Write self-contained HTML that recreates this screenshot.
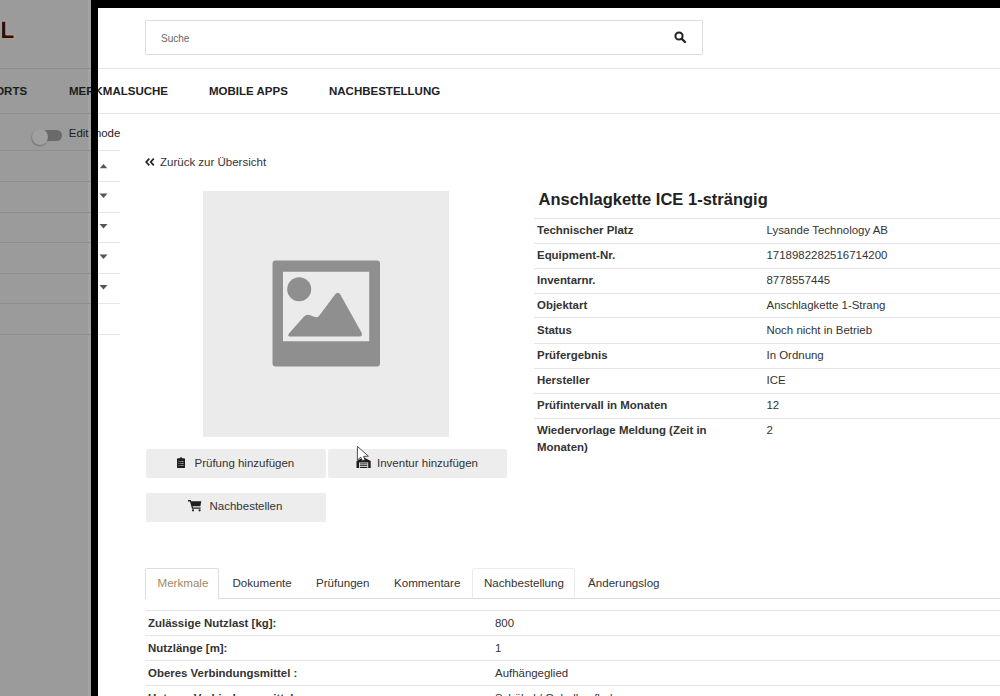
<!DOCTYPE html>
<html><head><meta charset="utf-8">
<style>
*{margin:0;padding:0;box-sizing:border-box}
html,body{width:1000px;height:696px;overflow:hidden;background:#fff;font-family:"Liberation Sans",sans-serif;color:#333}
.a{position:absolute;white-space:nowrap}
#gray{position:absolute;left:0;top:0;width:91px;height:696px;background:#9b9b9b;overflow:hidden}
#blk-l{position:absolute;left:90.9px;top:0;width:6.8px;height:696px;background:#000}
#blk-t{position:absolute;left:91px;top:0;width:909px;height:7.8px;background:#000}
.hl{position:absolute;height:1px;background:#e6e6e6}
.nav{position:absolute;top:84.8px;font-size:11.5px;font-weight:bold;color:#222;letter-spacing:0}
.row{position:absolute;left:534px;width:466px;height:1px;background:#e4e4e4}
.lab{position:absolute;left:537px;font-size:11.45px;font-weight:bold;color:#333}
.val{position:absolute;left:766.5px;font-size:11.45px;color:#333}
.btn{position:absolute;height:29px;background:#ededed;border-radius:2px;font-size:12px;color:#333}
.tab{position:absolute;top:575.5px;font-size:11.6px;color:#333}
.mrow{position:absolute;left:145px;width:855px;height:1px;background:#e4e4e4}
.mlab{position:absolute;left:148px;margin-top:1px;font-size:11.45px;font-weight:bold;color:#333}
.mval{position:absolute;left:495px;margin-top:1px;font-size:11.45px;color:#333}
</style></head><body>

<!-- header lines in white area -->
<div class="hl" style="left:97px;top:68px;width:903px"></div>
<div class="hl" style="left:97px;top:113px;width:903px"></div>

<!-- search -->
<div style="position:absolute;left:145px;top:20px;width:558px;height:35px;border:1px solid #ddd;border-radius:1px"></div>
<div class="a" style="left:161px;top:32.5px;font-size:10px;color:#666">Suche</div>
<svg style="position:absolute;left:674px;top:31px" width="13" height="12" viewBox="0 0 13 12">
<circle cx="5" cy="5" r="3.6" fill="none" stroke="#222" stroke-width="2"/>
<line x1="7.6" y1="7.6" x2="11" y2="11" stroke="#222" stroke-width="2.2" stroke-linecap="round"/>
</svg>

<!-- nav -->
<div class="nav" style="left:69px">MERKMALSUCHE</div>
<div class="nav" style="left:209px">MOBILE APPS</div>
<div class="nav" style="left:329px">NACHBESTELLUNG</div>

<!-- sidebar parts in white -->
<div class="a" style="left:68.8px;top:126.5px;font-size:11.45px;color:#222">Edit mode</div>
<div class="hl" style="left:97px;top:150px;width:23px"></div>
<div class="hl" style="left:97px;top:181px;width:23px"></div>
<div class="hl" style="left:97px;top:212px;width:23px"></div>
<div class="hl" style="left:97px;top:242px;width:23px"></div>
<div class="hl" style="left:97px;top:273px;width:23px"></div>
<div class="hl" style="left:97px;top:303px;width:23px"></div>
<div class="hl" style="left:97px;top:334px;width:23px"></div>
<svg style="position:absolute;left:99px;top:163px" width="9" height="130" viewBox="0 0 9 130">
<path d="M0.8 5.2 L4.5 1 L8.2 5.2 Z" fill="#555"/>
<path d="M0.5 30.5 L8.5 30.5 L4.5 35 Z" fill="#555"/>
<path d="M0.5 61 L8.5 61 L4.5 65.5 Z" fill="#555"/>
<path d="M0.5 91.5 L8.5 91.5 L4.5 96 Z" fill="#555"/>
<path d="M0.5 122 L8.5 122 L4.5 126.5 Z" fill="#555"/>
</svg>

<!-- back link -->
<svg style="position:absolute;left:145px;top:158px" width="10" height="8" viewBox="0 0 10 8">
<path d="M4.3 0.7 L1.2 4 L4.3 7.3 M8.8 0.7 L5.7 4 L8.8 7.3" fill="none" stroke="#222" stroke-width="1.7"/>
</svg>
<div class="a" style="left:160px;top:155.5px;font-size:11.5px;color:#333">Zurück zur Übersicht</div>

<!-- image placeholder -->
<div style="position:absolute;left:203px;top:190.5px;width:246px;height:246px;background:#ebebec"></div>
<svg style="position:absolute;left:272px;top:260px" width="109" height="108" viewBox="272 260 109 108">
<path fill="#8f8f8f" fill-rule="evenodd" d="M275.5 260.5 H377 Q380 260.5 380 263.5 V363.5 Q380 366.5 377 366.5 H275.5 Q272.5 366.5 272.5 363.5 V263.5 Q272.5 260.5 275.5 260.5 Z M283 271.8 V341.3 H369.2 V271.8 Z"/>
<circle cx="299.2" cy="289.3" r="12" fill="#8f8f8f"/>
<path fill="#8f8f8f" d="M290 336.4 Q287 336.4 289 333.5 L304 316.5 Q307 313.5 311 315.5 L314 316.8 Q317 318 319 316 L335 294.5 Q337.7 291 340.3 294.5 L361.5 332.5 Q363 336.4 359.5 336.4 Z"/>
</svg>

<!-- buttons -->
<div class="btn" style="left:145.5px;top:449px;width:180px"></div>
<div class="btn" style="left:328px;top:449px;width:179px"></div>
<div class="btn" style="left:145.5px;top:492.5px;width:180px"></div>
<div class="a" style="left:194.5px;top:456.5px;font-size:11.5px;color:#333">Prüfung hinzufügen</div>
<div class="a" style="left:377px;top:456.5px;font-size:11.5px;color:#333">Inventur hinzufügen</div>
<div class="a" style="left:209.5px;top:499.5px;font-size:11.5px;color:#333">Nachbestellen</div>

<!-- icons -->
<svg style="position:absolute;left:176px;top:456px" width="10" height="13" viewBox="176 456 10 13">
<path fill="#1e1e1e" d="M178 458.3 H180 Q180.3 457 181 457 Q181.7 457 182 458.3 H184 Q185 458.3 185 459.3 V467.2 Q185 468.1 184 468.1 H178 Q177 468.1 177 467.2 V459.3 Q177 458.3 178 458.3 Z"/>
<rect x="178.4" y="461" width="1.1" height="1" fill="#8a8a8a"/><rect x="180.3" y="461" width="3.3" height="1" fill="#8a8a8a"/>
<rect x="178.4" y="463" width="1.1" height="1" fill="#8a8a8a"/><rect x="180.3" y="463" width="3.3" height="1" fill="#8a8a8a"/>
<rect x="178.4" y="465" width="1.1" height="1" fill="#8a8a8a"/><rect x="180.3" y="465" width="3.3" height="1" fill="#8a8a8a"/>
</svg>
<svg style="position:absolute;left:356px;top:456px" width="16" height="13" viewBox="356 456 16 13">
<path fill="#1e1e1e" d="M356.5 461 L363.6 457.3 L370.7 461 V468 H368.2 V462.6 H359 V468 H356.5 Z"/>
<rect x="359.8" y="463.4" width="7.6" height="1" fill="#1e1e1e"/>
<rect x="359.8" y="465.2" width="7.6" height="1" fill="#1e1e1e"/>
<rect x="359.8" y="467" width="7.6" height="1" fill="#1e1e1e"/>
</svg>
<svg style="position:absolute;left:187px;top:499px" width="16" height="13" viewBox="187 499 16 13">
<path fill="#1e1e1e" d="M188 500 H190.6 L191.2 501.2 H201.3 L200.4 506.2 H192.6 L193 507.6 H200.6 V508.8 H192 L190 501.4 H188 Z"/>
<circle cx="193" cy="510.3" r="1.1" fill="#1e1e1e"/>
<circle cx="199.6" cy="510.3" r="1.1" fill="#1e1e1e"/>
</svg>

<!-- title -->
<div class="a" style="left:538.5px;top:190px;font-size:16.5px;font-weight:bold;color:#222">Anschlagkette ICE 1-strängig</div>

<!-- details table -->
<div class="row" style="top:218px"></div>
<div class="row" style="top:243px"></div>
<div class="row" style="top:268px"></div>
<div class="row" style="top:293px"></div>
<div class="row" style="top:317px"></div>
<div class="row" style="top:343px"></div>
<div class="row" style="top:367.5px"></div>
<div class="row" style="top:393px"></div>
<div class="row" style="top:418px"></div>

<div class="lab" style="top:224px">Technischer Platz</div>
<div class="lab" style="top:249px">Equipment-Nr.</div>
<div class="lab" style="top:274px">Inventarnr.</div>
<div class="lab" style="top:299px">Objektart</div>
<div class="lab" style="top:324px">Status</div>
<div class="lab" style="top:349px">Prüfergebnis</div>
<div class="lab" style="top:374px">Hersteller</div>
<div class="lab" style="top:399px">Prüfintervall in Monaten</div>
<div class="lab" style="top:421.5px;line-height:17.6px;white-space:normal;width:200px">Wiedervorlage Meldung (Zeit in<br>Monaten)</div>

<div class="val" style="top:224px">Lysande Technology AB</div>
<div class="val" style="top:249px">1718982282516714200</div>
<div class="val" style="top:274px">8778557445</div>
<div class="val" style="top:299px">Anschlagkette 1-Strang</div>
<div class="val" style="top:324px">Noch nicht in Betrieb</div>
<div class="val" style="top:349px">In Ordnung</div>
<div class="val" style="top:374px">ICE</div>
<div class="val" style="top:399px">12</div>
<div class="val" style="top:424px">2</div>

<!-- tabs -->
<div style="position:absolute;left:146px;top:598px;width:854px;height:1px;background:#ddd"></div>
<div style="position:absolute;left:145px;top:568px;width:74px;height:31px;border:1px solid #ddd;border-bottom:none;background:#fff;border-radius:2px 2px 0 0"></div>
<div style="position:absolute;left:472px;top:568px;width:103px;height:30px;border:1px solid #ececec;border-bottom:none;border-radius:2px 2px 0 0"></div>
<div class="tab" style="left:157.5px;color:#9f8763">Merkmale</div>
<div class="tab" style="left:232.5px">Dokumente</div>
<div class="tab" style="left:316px">Prüfungen</div>
<div class="tab" style="left:394px">Kommentare</div>
<div class="tab" style="left:484px">Nachbestellung</div>
<div class="tab" style="left:588px">Änderungslog</div>

<div class="mrow" style="top:610px"></div>
<div class="mrow" style="top:635px"></div>
<div class="mrow" style="top:660px"></div>
<div class="mrow" style="top:685px"></div>
<div class="mlab" style="top:616px">Zulässige Nutzlast [kg]:</div>
<div class="mlab" style="top:641px">Nutzlänge [m]:</div>
<div class="mlab" style="top:666px">Oberes Verbindungsmittel :</div>
<div class="mlab" style="top:691px">Unteres Verbindungsmittel :</div>
<div class="mval" style="top:616px">800</div>
<div class="mval" style="top:641px">1</div>
<div class="mval" style="top:666px">Aufhängeglied</div>
<div class="mval" style="top:691px">Schäkel / Gabelkopfhaken</div>

<!-- gray overlay (left) -->
<div id="gray">
  <div style="position:absolute;left:87.5px;top:0;width:4px;height:696px;background:#a2a2a2"></div>
  <svg style="position:absolute;left:0;top:0" width="20" height="45" viewBox="0 0 20 45"><path d="M1.6 21.2 H5.8 V35 H14 V38.6 H1.6 Z" fill="#2a1010" stroke="#c9a67e" stroke-width="0.9"/></svg>
  <div style="position:absolute;left:0;top:68px;width:91px;height:1px;background:#8e8e8e"></div>
  <div style="position:absolute;left:0;top:113px;width:91px;height:1px;background:#8e8e8e"></div>
  <div class="nav" style="left:-28.5px;color:#1c1c1c">REPORTS</div>
  <div class="nav" style="left:69px;color:#1c1c1c">MERKMALSUCHE</div>
  <div class="a" style="left:68.8px;top:126.5px;font-size:11.45px;color:#1c1c1c">Edit mode</div>
  <div style="position:absolute;left:0;top:150px;width:91px;height:1px;background:#8e8e8e"></div>
  <div style="position:absolute;left:0;top:181px;width:91px;height:1px;background:#8e8e8e"></div>
  <div style="position:absolute;left:0;top:212px;width:91px;height:1px;background:#8e8e8e"></div>
  <div style="position:absolute;left:0;top:242px;width:91px;height:1px;background:#8e8e8e"></div>
  <div style="position:absolute;left:0;top:273px;width:91px;height:1px;background:#8e8e8e"></div>
  <div style="position:absolute;left:0;top:303px;width:91px;height:1px;background:#8e8e8e"></div>
  <div style="position:absolute;left:0;top:334px;width:91px;height:1px;background:#8e8e8e"></div>
  <!-- toggle -->
  <div style="position:absolute;left:41px;top:129.5px;width:21px;height:11.5px;border-radius:6px;background:#6a6a6a"></div>
  <div style="position:absolute;left:31.5px;top:128.5px;width:16px;height:16px;border-radius:50%;background:#a0a0a0;box-shadow:-0.5px 1px 1.5px rgba(0,0,0,0.3)"></div>
</div>
<div id="blk-l"></div>
<div id="blk-t"></div>

<!-- cursor -->
<svg style="position:absolute;left:356px;top:445px" width="14" height="17" viewBox="356 445 14 17">
<path d="M357.4 446.4 L357.4 460 L360.8 457.2 L362.3 460.8 L365 459.8 L363.6 456.4 L368.4 456.2 Z" fill="#fff" stroke="#3a3a3a" stroke-width="0.9" stroke-linejoin="miter"/>
</svg>
</body></html>
